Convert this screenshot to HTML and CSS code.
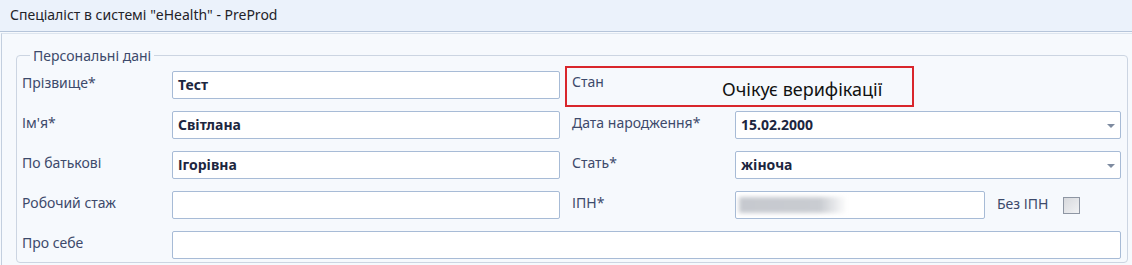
FILE: index.html
```html
<!DOCTYPE html>
<html lang="uk">
<head>
    <meta charset="UTF-8">
    <title>Спеціаліст в системі "eHealth" - PreProd</title>
    <link rel="stylesheet" href="styles.css">
</head>
<body>
    <div class="titlebar">Спеціаліст в системі "eHealth" - PreProd</div>

    <div class="panel">
        <fieldset class="group">
            <legend>Персональні дані</legend>

            <div class="row">
                <label>Прізвище*</label>
                <div class="field">Тест</div>
                <div class="status-box">
                    <span class="status-label">Стан</span>
                    <span class="status-value">Очікує верифікації</span>
                </div>
            </div>

            <div class="row">
                <label>Ім'я*</label>
                <div class="field">Світлана</div>
                <label class="right">Дата народження*</label>
                <div class="field combo">15.02.2000<span class="arrow"></span></div>
            </div>

            <div class="row">
                <label>По батькові</label>
                <div class="field">Ігорівна</div>
                <label class="right">Стать*</label>
                <div class="field combo">жіноча<span class="arrow"></span></div>
            </div>

            <div class="row">
                <label>Робочий стаж</label>
                <div class="field"></div>
                <label class="right">ІПН*</label>
                <div class="ipn-line">
                    <div class="field ipn"><span class="blurred"></span></div>
                    <label class="no-ipn">Без ІПН</label>
                    <span class="checkbox"></span>
                </div>
            </div>

            <div class="row wide">
                <label>Про себе</label>
                <div class="field"></div>
            </div>
        </fieldset>
    </div>
</body>
</html>
```

FILE: styles.css
```css
body {
    margin: 0;
    font-family: "Noto Sans", "Open Sans", sans-serif;
    font-size: 14px;
    color: #3d4a6b;
    background-color: #f6f9fd;
    overflow: hidden;
}
.titlebar {
    height: 31px;
    line-height: 30px;
    padding-left: 10px;
    background-color: #ebf2fb;
    border-bottom: 1px solid #b6c5da;
    color: #1f2329;
    font-size: 14px;
}
.panel {
    margin-top: 1px;
    margin-left: 1px;
    border-left: 1px solid #c3cfdf;
    border-top: 1px solid #dde5ef;
    background-color: #f6f9fd;
    padding: 12px 4px 0 14px;
    height: 220px;
}
.group {
    margin: 0;
    border: 1px solid #ccd5e2;
    border-radius: 4px;
    padding: 6px 5px 3px 5px;
}
.group legend {
    margin-left: 8px;
    padding: 0 3px;
    font-size: 14px;
    line-height: 19px;
    color: #3d4a6b;
}
.row {
    display: grid;
    grid-template-columns: 150px 388px 175px 386px;
    align-items: center;
    margin-bottom: 12px;
}
.row label {
    padding-bottom: 6px;
}
.row label.right {
    padding-left: 12px;
}
.row.wide {
    grid-template-columns: 150px 949px;
    margin-bottom: 0;
}
.field {
    height: 26px;
    line-height: 26px;
    padding: 0 5px;
    background-color: #ffffff;
    border: 1px solid #a7bbd6;
    border-radius: 2px;
    font-weight: bold;
    color: #1c2640;
    font-size: 14px;
    position: relative;
}
.combo .arrow {
    position: absolute;
    right: 5px;
    top: 12px;
    border-left: 4px solid transparent;
    border-right: 4px solid transparent;
    border-top: 4px solid #7e8ba0;
}
.status-box {
    grid-column: 3 / 5;
    width: 345px;
    height: 37px;
    margin: -5px 0 -8px 5px;
    border: 2px solid #d9262c;
    display: flex;
    align-items: flex-start;
}
.status-label {
    padding: 4px 0 0 5px;
    width: 150px;
}
.status-value {
    padding-top: 9px;
    font-size: 18px;
    color: #111111;
}
.ipn-line {
    display: flex;
    align-items: center;
}
.field.ipn {
    width: 238px;
}
.blurred {
    position: absolute;
    left: 3px;
    top: 5px;
    width: 108px;
    height: 16px;
    background: linear-gradient(to right, #c6c9cf 0%, #c9ccd1 75%, rgba(220, 222, 226, 0) 100%);
    filter: blur(2px);
}
.no-ipn {
    margin-left: 12px;
    padding-bottom: 4px !important;
}
.checkbox {
    width: 15px;
    height: 15px;
    margin-left: 15px;
    border: 1px solid #8e96a3;
    background: linear-gradient(135deg, #d7d9dd, #f1f2f4);
}
```
